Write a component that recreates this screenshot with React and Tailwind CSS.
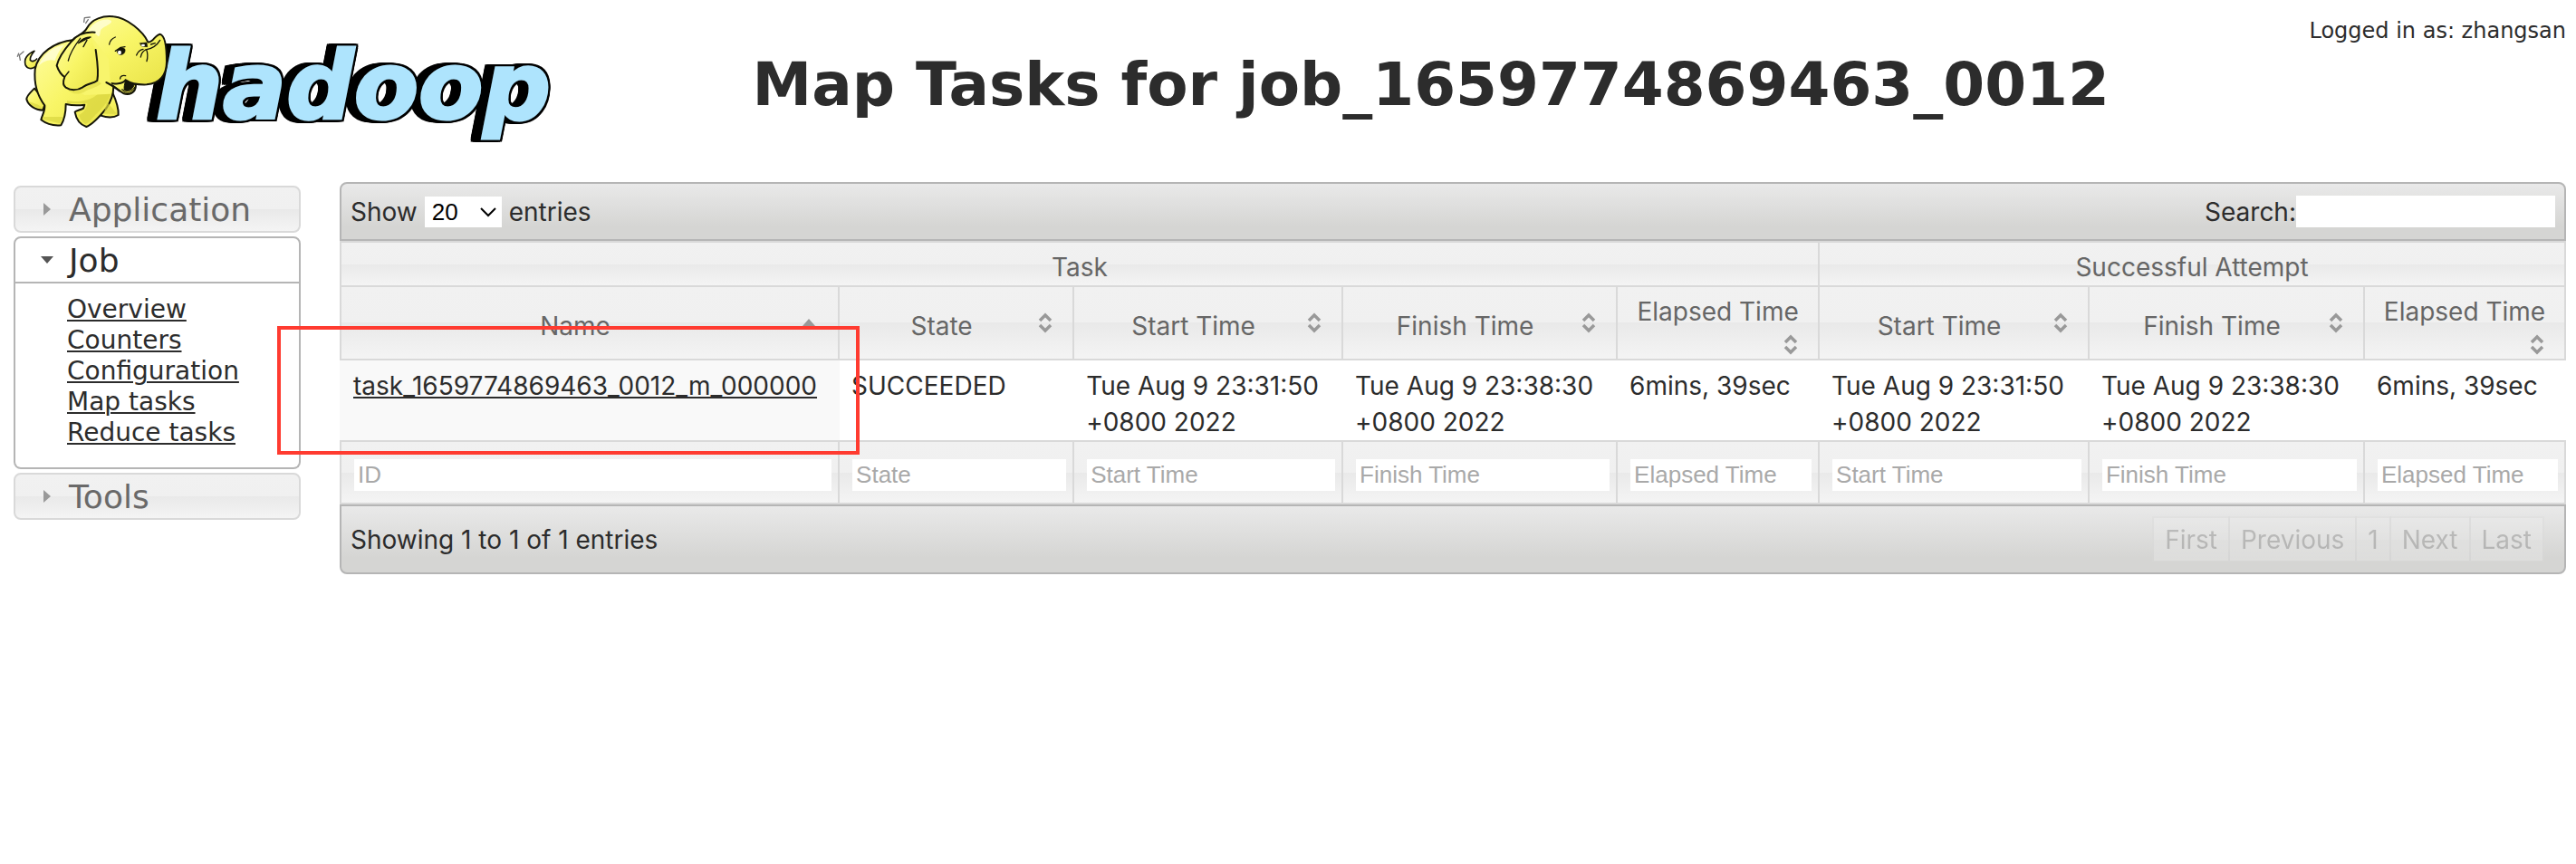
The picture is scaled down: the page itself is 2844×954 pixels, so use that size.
import React from 'react';

const columns = [
  { name: 'Name', filter: 'ID', sorted: true, width: 'w-[22.46%]' },
  { name: 'State', filter: 'State', width: 'w-[10.54%]' },
  { name: 'Start Time', filter: 'Start Time', width: 'w-[12.08%]' },
  { name: 'Finish Time', filter: 'Finish Time', width: 'w-[12.33%]' },
  { name: 'Elapsed Time', filter: 'Elapsed Time', width: 'w-[9.07%]' },
  { name: 'Start Time', filter: 'Start Time', width: 'w-[12.12%]' },
  { name: 'Finish Time', filter: 'Finish Time', width: 'w-[12.37%]' },
  { name: 'Elapsed Time', filter: 'Elapsed Time', width: 'w-[9.03%]' },
];

const row = [
  'SUCCEEDED',
  'Tue Aug 9 23:31:50 +0800 2022',
  'Tue Aug 9 23:38:30 +0800 2022',
  '6mins, 39sec',
  'Tue Aug 9 23:31:50 +0800 2022',
  'Tue Aug 9 23:38:30 +0800 2022',
  '6mins, 39sec',
];

const glass = 'bg-[linear-gradient(#f1f1f1_0%,#f0f0f0_50%,#e9e9e9_50%,#f4f4f4_100%)]';
const bar = 'border-2 border-[#b5b5b5] bg-[linear-gradient(#e9e9e9_0%,#d5d5d3_78%,#d5d5d3_100%)]';

function Elephant() {
  return (
    <g
      transform="translate(10 5) scale(0.3333)"
      fill="url(#skin)"
      stroke="#151508"
      strokeWidth="6"
      strokeLinejoin="round"
      strokeLinecap="round"
    >
      {/* tail and motion marks */}
      <path strokeWidth="5" d="M88 205C76 216 60 213 54 200C50 184 56 166 84 154C76 164 68 174 70 184C76 192 86 186 92 180" />
      <path fill="none" stroke="#777" strokeWidth="4" d="M48 156L34 168L37 184M32 162L28 172M248 58L250 44L268 42M254 62L262 50" />
      {/* far legs */}
      <path d="M84 278C70 292 58 302 58 314C64 334 86 350 112 350L122 322Z" />
      <path d="M342 290C352 312 364 340 362 366C346 376 322 374 304 368L322 300Z" />
      {/* body and near legs */}
      <path d="M215 117C150 124 96 160 86 215C82 262 92 300 118 334C120 352 110 364 106 382C124 396 150 402 172 400C184 380 188 356 188 330C210 335 232 335 250 332L246 344C236 350 224 350 218 356C222 378 234 398 256 405C280 396 304 366 322 344C338 320 346 300 346 272L320 190Z" />
      <path fill="#d9d640" stroke="none" opacity=".75" d="M192 318C230 326 290 322 316 268C328 268 338 276 340 286C328 330 300 352 280 372C270 384 262 392 254 396C240 388 234 376 232 366C248 356 256 348 260 328L192 327Z" />
      <path fill="#d9d640" stroke="none" opacity=".7" d="M112 372L178 372L168 394L112 380ZM64 322C80 326 98 330 112 344C90 342 74 336 64 322ZM314 362L324 322C340 340 348 352 357 362Z" />
      {/* jaw */}
      <path strokeWidth="6" d="M322 258C346 266 360 284 378 294C396 302 420 294 420 266L390 240Z" />
      {/* head and trunk */}
      <path d="M205 124C224 100 246 100 258 78C274 48 312 36 346 40C392 44 444 90 460 124C474 130 484 100 500 98C518 102 522 144 522 190C522 232 500 262 456 265C430 266 404 262 386 250C378 262 350 266 322 258L240 262L200 200Z" />
      <path fill="#f8f56c" stroke="none" d="M196 128L262 92L330 180L335 254C345 268 343 284 336 296L250 300L180 260Z" />
      <path fill="none" d="M322 258C340 266 354 278 366 286" />
      <path fill="#151508" strokeWidth="3" d="M386 250C396 258 406 260 414 263C414 276 404 284 384 286C378 276 384 262 386 250Z" />
      <path fill="#e8e24a" strokeWidth="3" d="M374 282C384 298 412 296 418 272C408 288 392 288 382 284Z" />
      <path fill="#fffde0" stroke="none" opacity=".75" d="M264 86C280 58 308 48 330 50C352 56 330 66 310 78C296 88 306 100 296 106C288 96 276 92 264 86ZM98 204C110 166 150 136 184 134C166 150 156 172 152 186C136 178 108 190 98 204Z" />
      {/* ear */}
      <path stroke="none" d="M286 92C256 90 226 104 206 122C184 148 164 176 158 202C164 220 172 232 184 240C178 256 178 268 188 275C206 286 228 284 244 274C258 262 280 262 292 252C298 220 292 186 287 150C272 120 270 100 286 92Z" />
      <path fill="#d9d640" stroke="none" opacity=".5" d="M190 278C210 288 230 286 246 276C262 266 282 264 295 254L306 262C290 276 262 280 248 290C228 300 204 296 190 278Z" />
      <path fill="none" d="M284 92C254 90 226 98 205 124C184 148 164 176 158 202C164 220 172 232 184 240C178 256 178 268 188 275C206 286 228 284 244 274C258 262 280 262 292 252C298 220 292 186 287 150" />
      <path fill="none" strokeWidth="4" d="M236 112C216 138 202 160 196 186M270 108C252 108 240 116 230 128M258 118L246 140M184 240L198 222" />
      <path fill="#151508" strokeWidth="3" d="M234 126C240 114 254 110 268 110C252 116 244 122 234 126Z" />
      {/* face */}
      <path fill="none" strokeWidth="4" d="M332 132C334 120 342 112 352 108M352 154L370 142L384 140M422 168C426 158 434 150 444 148M436 174C438 162 444 154 452 150M456 188C460 174 460 164 456 152M452 150C476 146 492 132 500 118M470 132L484 128M368 246C368 236 376 234 386 236" />
      <path fill="#151508" strokeWidth="2" d="M358 158C358 146 372 138 384 148C386 160 378 168 366 166ZM434 128L456 126L458 140L440 138Z" />
      <ellipse cx="366" cy="159" rx="6" ry="7" fill="#fff" stroke="none" />
      <ellipse cx="444" cy="135" rx="6" ry="4" fill="#fff" stroke="none" />
    </g>
  );
}

function Logo() {
  return (
    <svg viewBox="0 0 620 170" className="h-[170px] w-[620px]" role="img" aria-label="hadoop">
      <defs>
        <linearGradient id="skin" x1="0" y1="0" x2="1" y2="1">
          <stop offset="0" stopColor="#fffda0" />
          <stop offset=".5" stopColor="#f8f566" />
          <stop offset="1" stopColor="#e9e348" />
        </linearGradient>
      </defs>
      <text
        x="172"
        y="131"
        fill="#aee4fd"
        stroke="#aee4fd"
        strokeWidth="3"
        className="font-['DejaVu_Sans',sans-serif] text-[104px] font-bold italic [filter:drop-shadow(2px_0_0_#000)_drop-shadow(-2px_0_0_#000)_drop-shadow(0_2px_0_#000)_drop-shadow(0_-2px_0_#000)_drop-shadow(-4px_0_0_#000)_drop-shadow(-5px_0_0_#000)]"
      >
        hadoop
      </text>
      <Elephant />
    </svg>
  );
}

function SortIcon({ sorted }) {
  return (
    <svg viewBox="0 0 32 32" className="size-8 shrink-0" aria-hidden="true">
      {sorted ? (
        <path d="M7 20L14 12L21 20Z" fill="#999" />
      ) : (
        <path d="M10 14L16 8L22 14M10 19L16 25L22 19" fill="none" stroke="#999" strokeWidth="3.5" />
      )}
    </svg>
  );
}

function MenuHeading({ children, open }) {
  return (
    <h3>
      <button
        type="button"
        aria-expanded={!!open}
        className={
          'flex h-[52px] w-full items-center border-2 pl-[27px] text-left text-4xl leading-none ' +
          (open
            ? 'rounded-t-lg border-[#b5b5b5] bg-white text-[#2c2c2c]'
            : 'rounded-lg border-[#d9d9d9] text-[#696969] ' + glass)
        }
      >
        <svg viewBox="0 0 16 16" className="mr-4 size-4" aria-hidden="true">
          {open ? <path d="M1 4H15L8 12Z" fill="#555" /> : <path d="M4 1V15L12 8Z" fill="#999" />}
        </svg>
        <span className="pt-[2px]">{children}</span>
      </button>
    </h3>
  );
}

export default function App() {
  return (
    <div className="min-h-screen bg-white pr-[11px] font-['DejaVu_Sans',sans-serif] text-[#2c2c2c]">
      <header className="flex h-[201px] items-start">
        <a href="#" className="w-[610px] shrink-0">
          <Logo />
        </a>
        <h1 className="grow pt-[56px] text-center text-[66px] leading-[76px] font-bold whitespace-nowrap">
          Map Tasks for job_1659774869463_0012
        </h1>
        <div className="shrink-0 pt-[18px] text-2xl whitespace-nowrap">Logged in as: zhangsan</div>
      </header>

      <div className="flex items-start gap-[43px] pl-[15px]">
        <nav className="mt-1 flex w-[317px] shrink-0 flex-col gap-1">
          <MenuHeading>Application</MenuHeading>
          <div>
            <MenuHeading open>Job</MenuHeading>
            <ul className="rounded-b-lg border-2 border-t-0 border-[#b5b5b5] pt-3 pb-[21px] pl-[57px] text-[28px] leading-[34px]">
              {['Overview', 'Counters', 'Configuration', 'Map tasks', 'Reduce tasks'].map((item) => (
                <li key={item}>
                  <a href="#" className="underline decoration-2 underline-offset-2">
                    {item}
                  </a>
                </li>
              ))}
            </ul>
          </div>
          <MenuHeading>Tools</MenuHeading>
        </nav>

        <main className="relative min-w-0 grow font-[Inter,sans-serif] text-[28px]">
          <div className={'flex h-[65px] items-center justify-between rounded-t-lg pr-[10px] pl-[10px] ' + bar}>
            <label className="flex items-center gap-[8px]">
              Show
              <span className="relative flex">
                <select
                  defaultValue="20"
                  className="h-[34px] w-[85px] appearance-none bg-white pl-2 font-['Liberation_Sans',sans-serif] text-[26px] leading-[34px] text-black"
                >
                  <option>20</option>
                  <option>40</option>
                  <option>60</option>
                  <option>80</option>
                  <option>100</option>
                </select>
                <svg viewBox="0 0 18 12" className="pointer-events-none absolute top-[11px] right-[6px] h-3 w-[18px]" aria-hidden="true">
                  <path d="M1 2L9 10L17 2" fill="none" stroke="#000" strokeWidth="2" />
                </svg>
              </span>
              entries
            </label>
            <label className="flex items-center">
              Search:
              <input type="text" className="h-[35px] w-[286px] bg-white px-1 font-['Liberation_Sans',sans-serif] text-[26px]" />
            </label>
          </div>

          <table className="w-full table-fixed border-separate border-spacing-0">
            <colgroup>
              {columns.map((c, i) => (
                <col key={i} className={c.width} />
              ))}
            </colgroup>
            <thead className="leading-10 text-[#666]">
              <tr>
                <th colSpan={5} className={'border-2 border-[#d9d9d9] px-[14px] pt-[7px] font-normal ' + glass}>
                  Task
                </th>
                <th colSpan={3} className={'border-2 border-l-0 border-[#d9d9d9] px-[14px] pt-[7px] font-normal ' + glass}>
                  Successful Attempt
                </th>
              </tr>
              <tr>
                {columns.map((c, i) => (
                  <th
                    key={i}
                    className={'border-r-2 border-b-2 border-[#d9d9d9] px-[14px] pt-[7px] font-normal first:border-l-2 ' + glass}
                  >
                    <button type="button" className="flex w-full flex-wrap items-start justify-end">
                      <span className="grow whitespace-nowrap">{c.name}</span>
                      <SortIcon sorted={c.sorted} />
                    </button>
                  </th>
                ))}
              </tr>
            </thead>
            <tbody>
              <tr className="align-top leading-10">
                <td className="bg-[#f9f9f9] pt-2 pl-[15px] whitespace-nowrap">
                  <a href="#" className="underline decoration-2 underline-offset-2 [text-decoration-skip-ink:none]">
                    task_1659774869463_0012_m_000000
                  </a>
                </td>
                {row.map((cell, i) => (
                  <td key={i} className="pt-2 pr-4 pl-[13px]">
                    {cell}
                  </td>
                ))}
              </tr>
            </tbody>
            <tfoot>
              <tr>
                {columns.map((c, i) => (
                  <th
                    key={i}
                    className={'border-y-2 border-r-2 border-[#d9d9d9] pt-[19px] pr-[7px] pb-[13px] pl-[14px] font-normal first:border-l-2 ' + glass}
                  >
                    <input
                      type="text"
                      aria-label={'Filter by ' + c.filter}
                      placeholder={c.filter}
                      className="block h-[35px] w-full bg-white px-1 font-['Liberation_Sans',sans-serif] text-[26px] placeholder:text-[#a9a9a9]"
                    />
                  </th>
                ))}
              </tr>
            </tfoot>
          </table>

          <div className={'flex h-[77px] items-center justify-between rounded-b-lg pr-[22px] pl-[10px] ' + bar}>
            <div>Showing 1 to 1 of 1 entries</div>
            <div className="flex">
              {['First', 'Previous', '1', 'Next', 'Last'].map((label) => (
                <button
                  key={label}
                  type="button"
                  disabled
                  className={'-ml-[2px] h-[51px] border-2 border-[#d9d9d9] px-3 text-[#666] opacity-30 ' + glass}
                >
                  {label}
                </button>
              ))}
            </div>
          </div>

          {/* highlight around the task link */}
          <div className="pointer-events-none absolute top-[159px] -left-[69px] h-[142px] w-[643px] border-4 border-[#ff3b30]" />
        </main>
      </div>
    </div>
  );
}
